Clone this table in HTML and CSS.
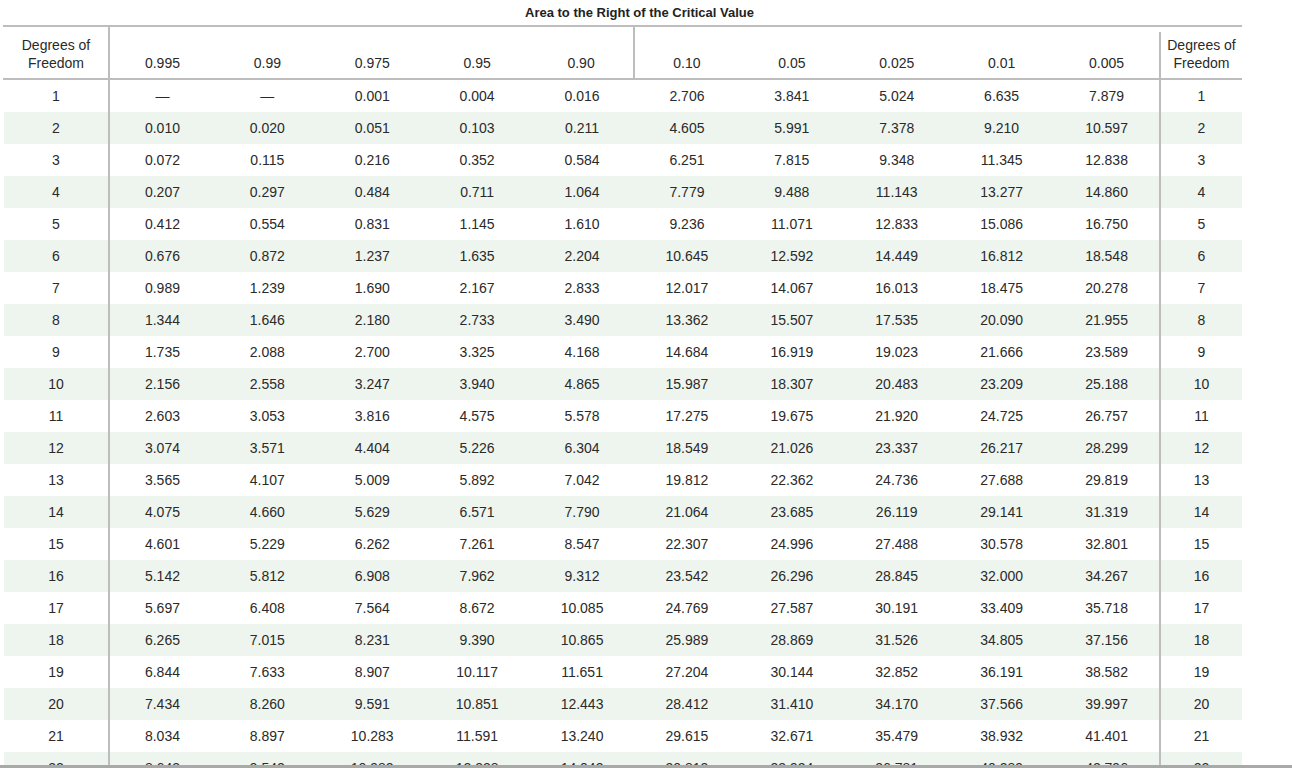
FILE: index.html
```html
<!DOCTYPE html>
<html lang="en">
<head>
<meta charset="utf-8">
<title>Chi-Square Critical Values</title>
<link rel="stylesheet" href="styles.css">
</head>
<body>
<div class="page">
  <div class="sheet">
    <div class="table">
      <div class="cols title-row">
        <div class="title">Area to the Right of the Critical Value</div>
      </div>
      <div class="cols head">
        <div class="c lab">Degrees of<br>Freedom</div>
        <div class="c">0.995</div>
        <div class="c">0.99</div>
        <div class="c">0.975</div>
        <div class="c">0.95</div>
        <div class="c mid">0.90</div>
        <div class="c">0.10</div>
        <div class="c">0.05</div>
        <div class="c">0.025</div>
        <div class="c">0.01</div>
        <div class="c">0.005</div>
        <div class="c rlab">Degrees of<br>Freedom</div>
      </div>
      <div class="rows">
        <div class="cols row"><div class="c lab">1</div><div class="c">—</div><div class="c">—</div><div class="c">0.001</div><div class="c">0.004</div><div class="c">0.016</div><div class="c">2.706</div><div class="c">3.841</div><div class="c">5.024</div><div class="c">6.635</div><div class="c">7.879</div><div class="c rlab">1</div></div>
        <div class="cols row"><div class="c lab">2</div><div class="c">0.010</div><div class="c">0.020</div><div class="c">0.051</div><div class="c">0.103</div><div class="c">0.211</div><div class="c">4.605</div><div class="c">5.991</div><div class="c">7.378</div><div class="c">9.210</div><div class="c">10.597</div><div class="c rlab">2</div></div>
        <div class="cols row"><div class="c lab">3</div><div class="c">0.072</div><div class="c">0.115</div><div class="c">0.216</div><div class="c">0.352</div><div class="c">0.584</div><div class="c">6.251</div><div class="c">7.815</div><div class="c">9.348</div><div class="c">11.345</div><div class="c">12.838</div><div class="c rlab">3</div></div>
        <div class="cols row"><div class="c lab">4</div><div class="c">0.207</div><div class="c">0.297</div><div class="c">0.484</div><div class="c">0.711</div><div class="c">1.064</div><div class="c">7.779</div><div class="c">9.488</div><div class="c">11.143</div><div class="c">13.277</div><div class="c">14.860</div><div class="c rlab">4</div></div>
        <div class="cols row"><div class="c lab">5</div><div class="c">0.412</div><div class="c">0.554</div><div class="c">0.831</div><div class="c">1.145</div><div class="c">1.610</div><div class="c">9.236</div><div class="c">11.071</div><div class="c">12.833</div><div class="c">15.086</div><div class="c">16.750</div><div class="c rlab">5</div></div>
        <div class="cols row"><div class="c lab">6</div><div class="c">0.676</div><div class="c">0.872</div><div class="c">1.237</div><div class="c">1.635</div><div class="c">2.204</div><div class="c">10.645</div><div class="c">12.592</div><div class="c">14.449</div><div class="c">16.812</div><div class="c">18.548</div><div class="c rlab">6</div></div>
        <div class="cols row"><div class="c lab">7</div><div class="c">0.989</div><div class="c">1.239</div><div class="c">1.690</div><div class="c">2.167</div><div class="c">2.833</div><div class="c">12.017</div><div class="c">14.067</div><div class="c">16.013</div><div class="c">18.475</div><div class="c">20.278</div><div class="c rlab">7</div></div>
        <div class="cols row"><div class="c lab">8</div><div class="c">1.344</div><div class="c">1.646</div><div class="c">2.180</div><div class="c">2.733</div><div class="c">3.490</div><div class="c">13.362</div><div class="c">15.507</div><div class="c">17.535</div><div class="c">20.090</div><div class="c">21.955</div><div class="c rlab">8</div></div>
        <div class="cols row"><div class="c lab">9</div><div class="c">1.735</div><div class="c">2.088</div><div class="c">2.700</div><div class="c">3.325</div><div class="c">4.168</div><div class="c">14.684</div><div class="c">16.919</div><div class="c">19.023</div><div class="c">21.666</div><div class="c">23.589</div><div class="c rlab">9</div></div>
        <div class="cols row"><div class="c lab">10</div><div class="c">2.156</div><div class="c">2.558</div><div class="c">3.247</div><div class="c">3.940</div><div class="c">4.865</div><div class="c">15.987</div><div class="c">18.307</div><div class="c">20.483</div><div class="c">23.209</div><div class="c">25.188</div><div class="c rlab">10</div></div>
        <div class="cols row"><div class="c lab">11</div><div class="c">2.603</div><div class="c">3.053</div><div class="c">3.816</div><div class="c">4.575</div><div class="c">5.578</div><div class="c">17.275</div><div class="c">19.675</div><div class="c">21.920</div><div class="c">24.725</div><div class="c">26.757</div><div class="c rlab">11</div></div>
        <div class="cols row"><div class="c lab">12</div><div class="c">3.074</div><div class="c">3.571</div><div class="c">4.404</div><div class="c">5.226</div><div class="c">6.304</div><div class="c">18.549</div><div class="c">21.026</div><div class="c">23.337</div><div class="c">26.217</div><div class="c">28.299</div><div class="c rlab">12</div></div>
        <div class="cols row"><div class="c lab">13</div><div class="c">3.565</div><div class="c">4.107</div><div class="c">5.009</div><div class="c">5.892</div><div class="c">7.042</div><div class="c">19.812</div><div class="c">22.362</div><div class="c">24.736</div><div class="c">27.688</div><div class="c">29.819</div><div class="c rlab">13</div></div>
        <div class="cols row"><div class="c lab">14</div><div class="c">4.075</div><div class="c">4.660</div><div class="c">5.629</div><div class="c">6.571</div><div class="c">7.790</div><div class="c">21.064</div><div class="c">23.685</div><div class="c">26.119</div><div class="c">29.141</div><div class="c">31.319</div><div class="c rlab">14</div></div>
        <div class="cols row"><div class="c lab">15</div><div class="c">4.601</div><div class="c">5.229</div><div class="c">6.262</div><div class="c">7.261</div><div class="c">8.547</div><div class="c">22.307</div><div class="c">24.996</div><div class="c">27.488</div><div class="c">30.578</div><div class="c">32.801</div><div class="c rlab">15</div></div>
        <div class="cols row"><div class="c lab">16</div><div class="c">5.142</div><div class="c">5.812</div><div class="c">6.908</div><div class="c">7.962</div><div class="c">9.312</div><div class="c">23.542</div><div class="c">26.296</div><div class="c">28.845</div><div class="c">32.000</div><div class="c">34.267</div><div class="c rlab">16</div></div>
        <div class="cols row"><div class="c lab">17</div><div class="c">5.697</div><div class="c">6.408</div><div class="c">7.564</div><div class="c">8.672</div><div class="c">10.085</div><div class="c">24.769</div><div class="c">27.587</div><div class="c">30.191</div><div class="c">33.409</div><div class="c">35.718</div><div class="c rlab">17</div></div>
        <div class="cols row"><div class="c lab">18</div><div class="c">6.265</div><div class="c">7.015</div><div class="c">8.231</div><div class="c">9.390</div><div class="c">10.865</div><div class="c">25.989</div><div class="c">28.869</div><div class="c">31.526</div><div class="c">34.805</div><div class="c">37.156</div><div class="c rlab">18</div></div>
        <div class="cols row"><div class="c lab">19</div><div class="c">6.844</div><div class="c">7.633</div><div class="c">8.907</div><div class="c">10.117</div><div class="c">11.651</div><div class="c">27.204</div><div class="c">30.144</div><div class="c">32.852</div><div class="c">36.191</div><div class="c">38.582</div><div class="c rlab">19</div></div>
        <div class="cols row"><div class="c lab">20</div><div class="c">7.434</div><div class="c">8.260</div><div class="c">9.591</div><div class="c">10.851</div><div class="c">12.443</div><div class="c">28.412</div><div class="c">31.410</div><div class="c">34.170</div><div class="c">37.566</div><div class="c">39.997</div><div class="c rlab">20</div></div>
        <div class="cols row"><div class="c lab">21</div><div class="c">8.034</div><div class="c">8.897</div><div class="c">10.283</div><div class="c">11.591</div><div class="c">13.240</div><div class="c">29.615</div><div class="c">32.671</div><div class="c">35.479</div><div class="c">38.932</div><div class="c">41.401</div><div class="c rlab">21</div></div>
        <div class="cols row"><div class="c lab">22</div><div class="c">8.643</div><div class="c">9.542</div><div class="c">10.982</div><div class="c">12.338</div><div class="c">14.042</div><div class="c">30.813</div><div class="c">33.924</div><div class="c">36.781</div><div class="c">40.289</div><div class="c">42.796</div><div class="c rlab">22</div></div>
      </div>
    </div>
  </div>
  <div class="bottom-bar"></div>
</div>
</body>
</html>
```

FILE: styles.css
```css
html, body {
  margin: 0;
  padding: 0;
  background: #ffffff;
}

body {
  font-family: "Liberation Sans", Arial, sans-serif;
  color: #2a2a2a;
}

.page {
  height: 768px;
  display: flex;
  flex-direction: column;
  overflow: hidden;
}

.sheet {
  flex: 1;
  min-height: 0;
  overflow: hidden;
  padding-left: 4px;
}

.table {
  width: 1238px;
}

.cols {
  display: grid;
  grid-template-columns: 106px repeat(10, minmax(0, 1fr)) 83px;
}

.c {
  box-sizing: border-box;
  font-size: 14px;
  text-align: center;
  white-space: nowrap;
}

.title-row {
  height: 25px;
}

.title {
  grid-column: 2 / 12;
  text-align: center;
  font-size: 13px;
  font-weight: bold;
  line-height: 25px;
  padding-left: 10px;
  color: #222222;
}

.head {
  height: 51px;
  border-top: 2px solid #bdbdbd;
  border-bottom: 2px solid #bdbdbd;
  margin-left: -1px;
  padding-left: 1px;
}

.head .c {
  display: flex;
  align-items: flex-end;
  justify-content: center;
  padding-bottom: 6px;
  line-height: 18px;
}

.head .mid {
  border-right: 2px solid #bdbdbd;
}

.lab {
  border-right: 2px solid #bdbdbd;
}

.row .rlab {
  border-left: 2px solid #bdbdbd;
}

.head .rlab {
  background: linear-gradient(#bdbdbd, #bdbdbd) left 5px / 2px calc(100% - 5px) no-repeat;
  padding-left: 2px;
}

.row {
  height: 32px;
}

.row .c {
  line-height: 32px;
}

.rows .row:nth-child(even) {
  background: #eef5ef;
}

.bottom-bar {
  height: 3px;
  background: #a9a9a9;
}
```
